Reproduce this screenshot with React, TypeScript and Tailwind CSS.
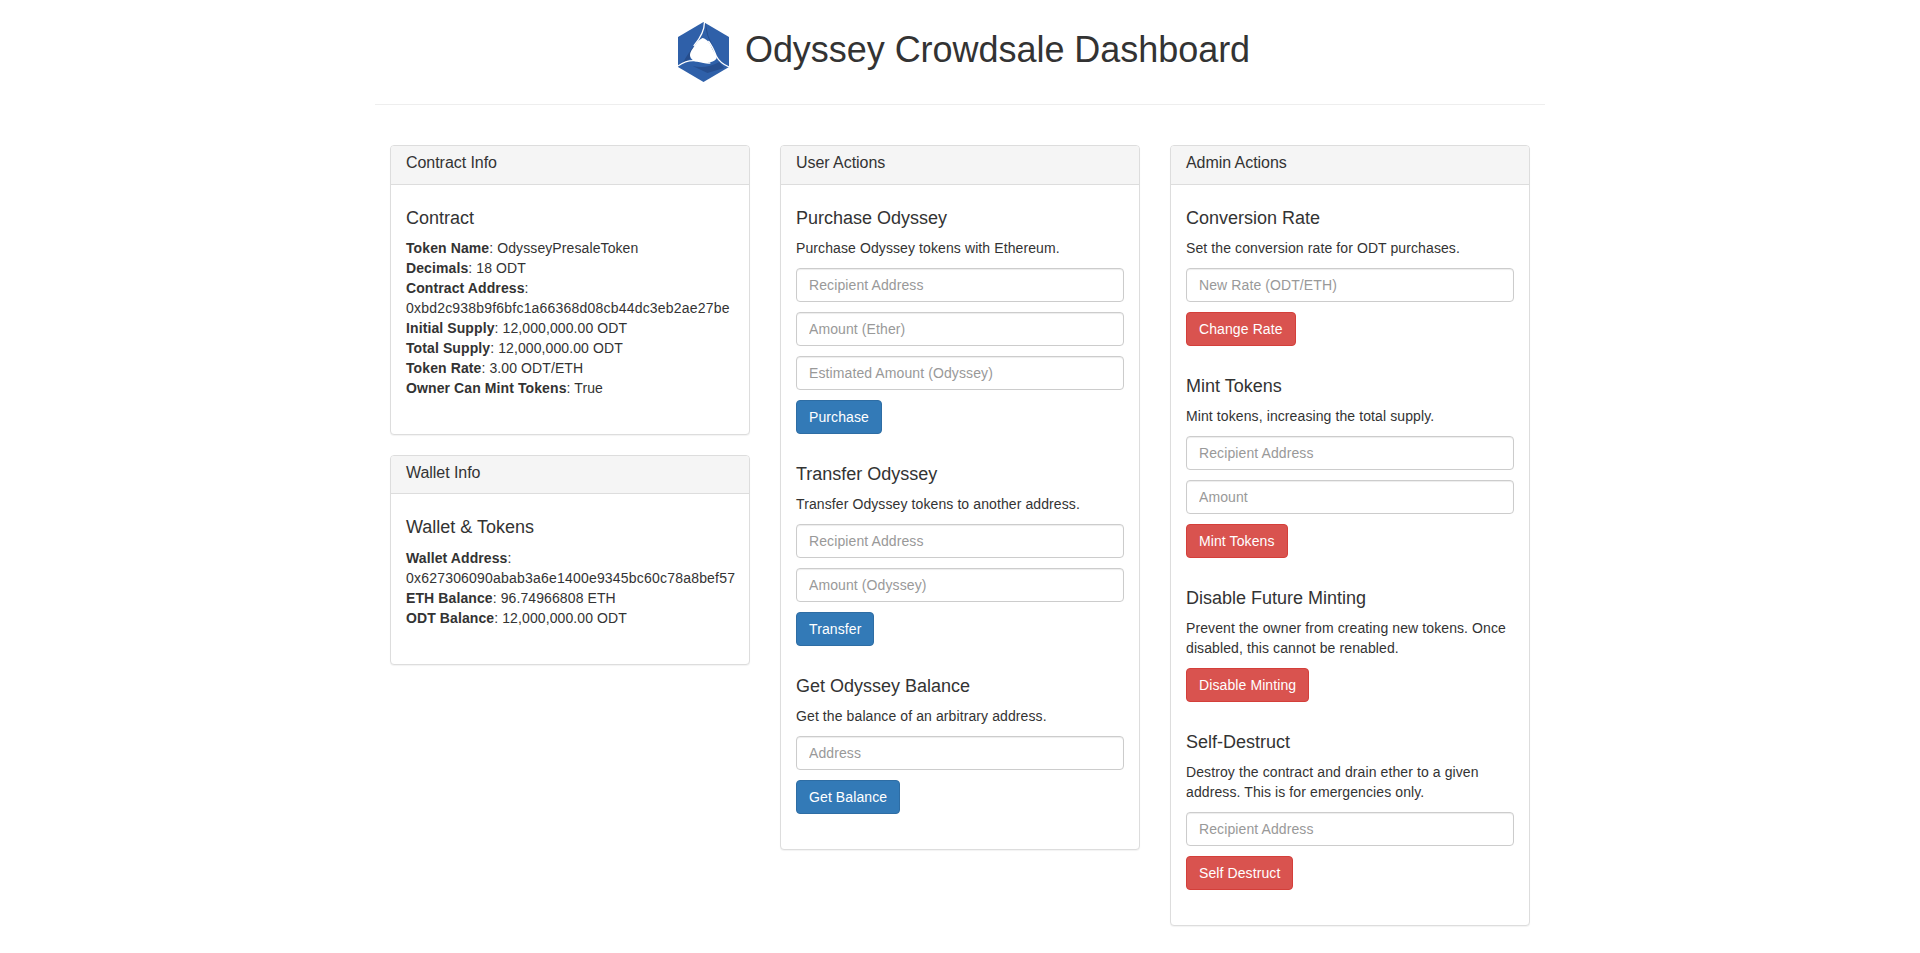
import type { ReactNode } from "react";

function Logo() {
  return (
    <svg viewBox="0 0 52 60" preserveAspectRatio="none" className="mt-[3px] h-[60px] w-[51px] shrink-0">
      <polygon points="26,0 52,15 52,45 26,60 0,45 0,15" fill="#2f60a9" />
      <path d="M28 1 C28 10 31 18 36 25 L31 14 Z" fill="#264d8c" />
      <path d="M15 44 C24 46 33 45 42 40 L47 46 L30 51 Z" fill="#274f90" />
      <path d="M17 23 C12 29 8 35 5 41 L12 37 Z" fill="#264d8c" />
      <path d="M25 16 C30 17 33 22 35 27 C37 31 41 34 39 37 C35 41 30 41 25 40 C21 39 17 40 15 38 C11 35 12 31 14 28 C17 24 20 18 25 16 Z" fill="#fff" />
      <path d="M27 0 C27 9 23 16 16 24" fill="none" stroke="#fff" strokeWidth="1.3" />
      <path d="M0 44 C7 39 14 38 20 39 C25 40 29 41 33 41" fill="none" stroke="#fff" strokeWidth="1.3" />
      <path d="M52 45 C45 42 41 38 39 34 C37 29 35 24 31 19" fill="none" stroke="#fff" strokeWidth="1.3" />
    </svg>
  );
}

function Panel({ title, children }: { title: string; children: ReactNode }) {
  return (
    <div className="mb-5 rounded border border-[#ddd] bg-white shadow-[0_1px_1px_rgba(0,0,0,0.05)]">
      <div className="rounded-t-[3px] border-b border-[#ddd] bg-[#f5f5f5] px-[15px] pt-2 pb-3 text-[16px] leading-[1.1] tracking-[-0.05px]">
        {title}
      </div>
      <div className="p-[15px]">{children}</div>
    </div>
  );
}

function Heading({ children }: { children: ReactNode }) {
  return <h4 className="mt-[9px] mb-2.5 text-[18px] leading-[1.1] font-medium tracking-normal">{children}</h4>;
}

function Field({ placeholder }: { placeholder: string }) {
  return (
    <input
      placeholder={placeholder}
      className="mb-2.5 block h-[34px] w-full rounded border border-[#ccc] bg-white px-3 py-1.5 text-[14px] leading-[20px] text-[#555] shadow-[inset_0_1px_1px_rgba(0,0,0,0.075)] outline-none placeholder:text-[#999]"
    />
  );
}

function Btn({ danger, children }: { danger?: boolean; children: ReactNode }) {
  return (
    <button
      className={
        danger
          ? "block h-[34px] rounded border border-[#d43f3a] bg-[#d9534f] px-3 text-[14px] leading-[20px] text-white"
          : "block h-[34px] rounded border border-[#2e6da4] bg-[#337ab7] px-3 text-[14px] leading-[20px] text-white"
      }
    >
      {children}
    </button>
  );
}

function Section({
  title,
  text,
  fields,
  button,
  danger,
}: {
  title: string;
  text: string;
  fields: string[];
  button: string;
  danger?: boolean;
}) {
  return (
    <div className="mb-[30.2px] last:mb-5">
      <Heading>{title}</Heading>
      <p className="mb-2.5">{text}</p>
      {fields.map((f) => (
        <Field key={f} placeholder={f} />
      ))}
      <Btn danger={danger}>{button}</Btn>
    </div>
  );
}

function Info({ label, value }: { label: string; value: string }) {
  return (
    <>
      <strong className="font-bold">{label}</strong>: {value}
      <br />
    </>
  );
}

function Address({ label, value }: { label: string; value: string }) {
  return (
    <>
      <strong className="font-bold">{label}</strong>:
      <span className="block tracking-[0.2px] whitespace-nowrap">{value}</span>
    </>
  );
}

export default function App() {
  return (
    <div
      className="bg-white text-[14px] leading-[20px] tracking-[0.1px] text-[#333]"
      style={{ fontFamily: '"Liberation Sans", Arial, sans-serif' }}
    >
      <div className="mx-auto w-[1170px]">
        <div className="flex h-[105px] items-center justify-center gap-4 border-b border-[#eee] pb-1 pl-2">
          <Logo />
          <h1 className="text-[36px] leading-[1.1] font-medium tracking-[-0.04px]">Odyssey Crowdsale Dashboard</h1>
        </div>
      </div>
      <div className="mx-auto mt-10 grid w-[1170px] grid-cols-3 items-start gap-[30px] px-[15px]">
        <div>
          <Panel title="Contract Info">
            <Heading>Contract</Heading>
            <div className="mb-[20.4px]">
              <Info label="Token Name" value="OdysseyPresaleToken" />
              <Info label="Decimals" value="18 ODT" />
              <Address label="Contract Address" value="0xbd2c938b9f6bfc1a66368d08cb44dc3eb2ae27be" />
              <Info label="Initial Supply" value="12,000,000.00 ODT" />
              <Info label="Total Supply" value="12,000,000.00 ODT" />
              <Info label="Token Rate" value="3.00 ODT/ETH" />
              <Info label="Owner Can Mint Tokens" value="True" />
            </div>
          </Panel>
          <Panel title="Wallet Info">
            <Heading>Wallet &amp; Tokens</Heading>
            <div className="mb-[20.4px]">
              <Address label="Wallet Address" value="0x627306090abab3a6e1400e9345bc60c78a8bef57" />
              <Info label="ETH Balance" value="96.74966808 ETH" />
              <Info label="ODT Balance" value="12,000,000.00 ODT" />
            </div>
          </Panel>
        </div>
        <Panel title="User Actions">
          <Section
            title="Purchase Odyssey"
            text="Purchase Odyssey tokens with Ethereum."
            fields={["Recipient Address", "Amount (Ether)", "Estimated Amount (Odyssey)"]}
            button="Purchase"
          />
          <Section
            title="Transfer Odyssey"
            text="Transfer Odyssey tokens to another address."
            fields={["Recipient Address", "Amount (Odyssey)"]}
            button="Transfer"
          />
          <Section
            title="Get Odyssey Balance"
            text="Get the balance of an arbitrary address."
            fields={["Address"]}
            button="Get Balance"
          />
        </Panel>
        <Panel title="Admin Actions">
          <Section
            title="Conversion Rate"
            text="Set the conversion rate for ODT purchases."
            fields={["New Rate (ODT/ETH)"]}
            button="Change Rate"
            danger
          />
          <Section
            title="Mint Tokens"
            text="Mint tokens, increasing the total supply."
            fields={["Recipient Address", "Amount"]}
            button="Mint Tokens"
            danger
          />
          <Section
            title="Disable Future Minting"
            text="Prevent the owner from creating new tokens. Once disabled, this cannot be renabled."
            fields={[]}
            button="Disable Minting"
            danger
          />
          <Section
            title="Self-Destruct"
            text="Destroy the contract and drain ether to a given address. This is for emergencies only."
            fields={["Recipient Address"]}
            button="Self Destruct"
            danger
          />
        </Panel>
      </div>
    </div>
  );
}
